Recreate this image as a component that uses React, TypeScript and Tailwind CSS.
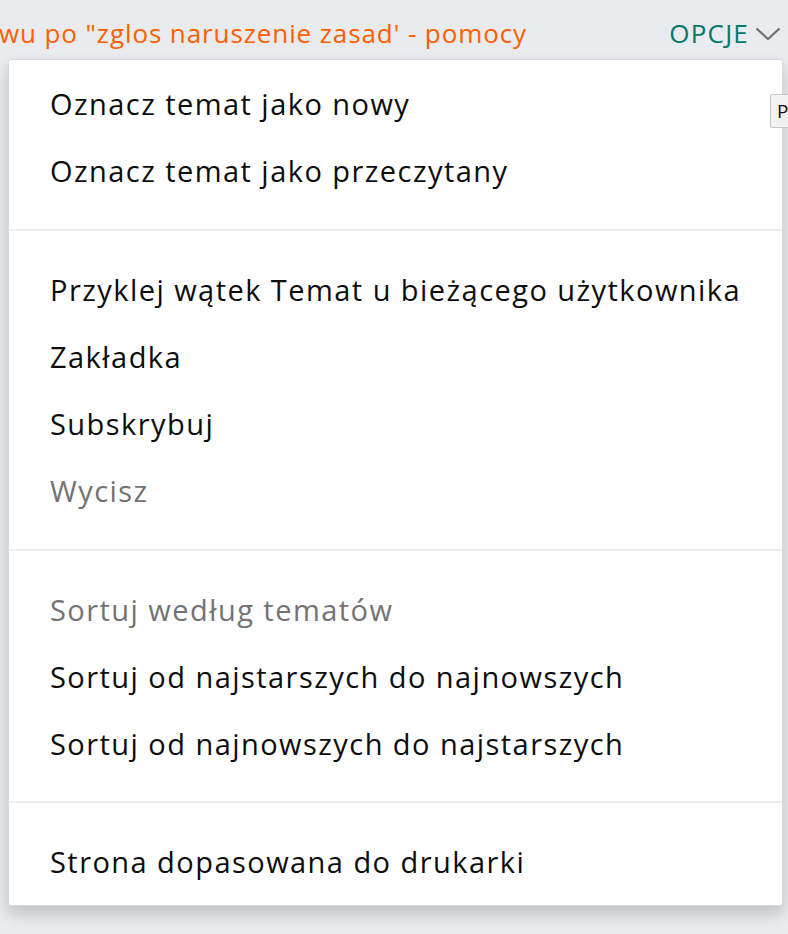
import React from "react";

const font = { fontFamily: '"Open Sans", "Noto Sans", sans-serif' };

function Item({ children, muted }: { children: React.ReactNode; muted?: boolean }) {
  return (
    <div
      className={`h-[67px] flex items-center pb-[2px] pl-[41px] text-[29px] font-medium tracking-[1.45px] leading-none whitespace-nowrap ${
        muted ? "text-[#737373]" : "text-[#0d0d0d]"
      }`}
    >
      {children}
    </div>
  );
}

function Divider() {
  return <div className="h-[2px] bg-[#eceef1]" />;
}

export default function App() {
  return (
    <div className="w-[788px] h-[934px] bg-[#e9ebee] overflow-hidden relative" style={font}>
      <div className="h-[59px] flex items-start pt-[15px] whitespace-nowrap">
        <span className="text-[26px] font-medium tracking-[0.9px] leading-[36px] text-[#ff6000] -ml-[1px]">
          wu po "zglos naruszenie zasad' - pomocy
        </span>
        <div className="ml-auto flex items-center pr-[7px]">
          <span className="text-[26px] font-medium tracking-[1.2px] leading-[36px] text-[#00796b]">OPCJE</span>
          <svg width="26" height="14" viewBox="0 0 26 14" className="ml-[6px] mt-[2px]">
            <path d="M1.5 1.5 L13 12 L24.5 1.5" fill="none" stroke="#707070" strokeWidth="2.2" />
          </svg>
        </div>
      </div>

      <div className="ml-[8px] w-[775px] bg-white border border-[#d6d8db] rounded-[3px] shadow-[0_8px_16px_rgba(0,0,0,0.18)]">
        <div className="pt-[11px] pb-[24px]">
          <Item>Oznacz temat jako nowy</Item>
          <Item>Oznacz temat jako przeczytany</Item>
        </div>
        <Divider />
        <div className="pt-[26px] pb-[24px]">
          <Item>Przyklej wątek Temat u bieżącego użytkownika</Item>
          <Item>Zakładka</Item>
          <Item>Subskrybuj</Item>
          <Item muted>Wycisz</Item>
        </div>
        <Divider />
        <div className="pt-[26px] pb-[23px]">
          <Item muted>Sortuj według tematów</Item>
          <Item>Sortuj od najstarszych do najnowszych</Item>
          <Item>Sortuj od najnowszych do najstarszych</Item>
        </div>
        <Divider />
        <div className="pt-[26px] pb-[9px]">
          <Item>Strona dopasowana do drukarki</Item>
        </div>
      </div>

      <div className="absolute left-[770px] top-[94px] h-[34px] w-[40px] bg-[#f2f2f2] border border-[#c8c8c8] rounded-[2px] pl-[6px] flex items-center text-[19px] text-[#111]">
        P
      </div>
    </div>
  );
}
